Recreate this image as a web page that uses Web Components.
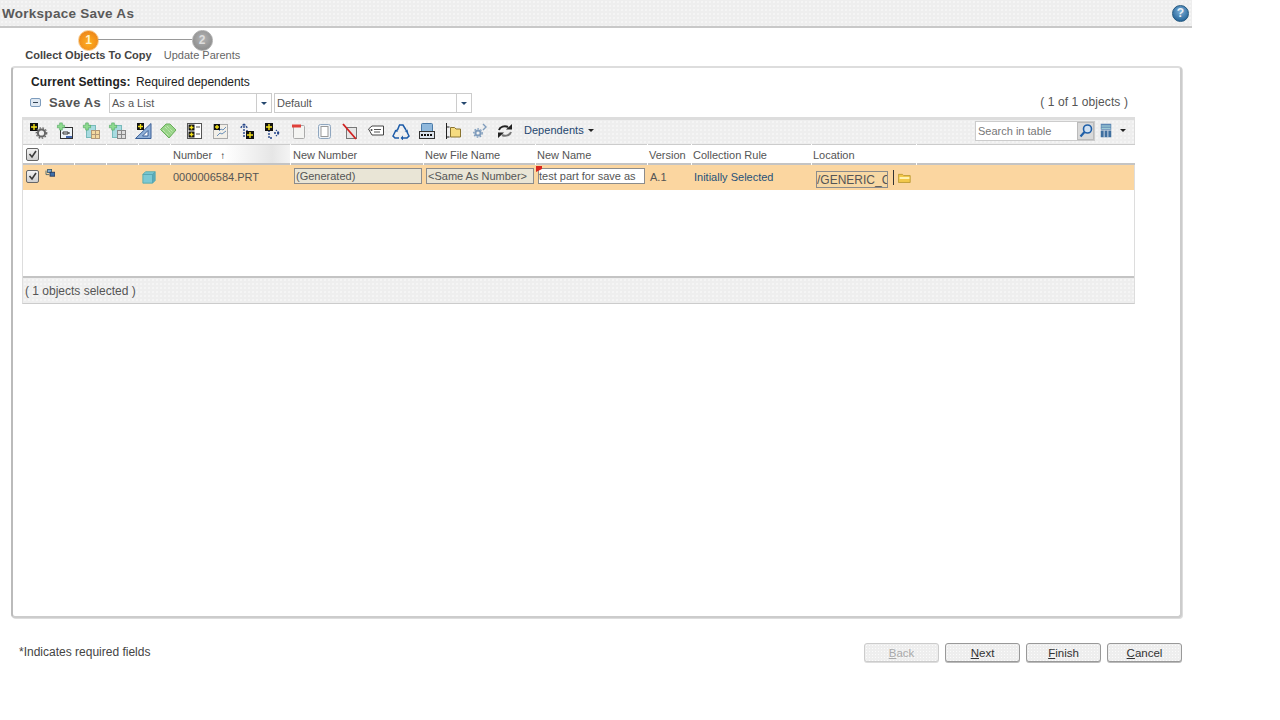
<!DOCTYPE html>
<html><head><meta charset="utf-8"><title>Workspace Save As</title>
<style>
html,body{margin:0;padding:0;background:#fff}
body{font:11px "Liberation Sans",Arial,sans-serif;color:#444;width:1280px;height:720px;overflow:hidden}
</style></head><body>
<x-page>
  <x-titlebar slot="top" title-text="Workspace Save As"></x-titlebar>
  <x-stepper slot="top"></x-stepper>
  <x-panel slot="main">
    <x-settings></x-settings>
    <x-saveas></x-saveas>
    <x-table></x-table>
  </x-panel>
  <x-footer slot="bottom"></x-footer>
</x-page>
<script>
const Y='#f4e21a',K='#111';
const mark=(x,y,s=7)=>`<rect x="${x}" y="${y}" width="${s}" height="${s}" fill="${K}"/><path d="M${x+s/2} ${y+1}v${s-2}M${x+1} ${y+s/2}h${s-2}" stroke="${Y}" stroke-width="1.4"/>`;
const plus=(x,y)=>`<path d="M${x-1.3} ${y-3.6}h2.6v2.300h2.300v2.600h-2.300v2.300h-2.600v-2.300h-2.300v-2.600h2.300z" fill="#8fdc90" stroke="#4aa35a" stroke-width=".6"/>`;
const gear=(x,y,r,c='#666')=>`<circle cx="${x}" cy="${y}" r="${r}" fill="none" stroke="${c}" stroke-width="2"/><circle cx="${x}" cy="${y}" r="${r+1.6}" fill="none" stroke="${c}" stroke-width="1.3" stroke-dasharray="1.6 1.5"/>`;
const ICONS={
 a:mark(0,1,8)+gear(11.500,11,3.6),
 b:`<rect x="4.500" y="5.500" width="12" height="11" fill="#eef4f8" stroke="#333"/><path d="M7 10h5v2H7zM12 11h2" fill="none" stroke="#333"/><rect x="10" y="14" width="6" height="2" fill="#46a"/>`+plus(5,4.500),
 c:`<rect x="4.500" y="3.500" width="9" height="12" fill="#a8dbe0" stroke="#7bb"/><rect x="9.500" y="8.500" width="8" height="8" fill="#f3d9a0" stroke="#b09878"/><path d="M9.500 12.500h8M13.500 8.500v8" stroke="#b09878"/>`+plus(5,4.500),
 d:`<rect x="4.500" y="3.500" width="9" height="12" fill="#a8dbe0" stroke="#7bb"/><rect x="9.500" y="8.500" width="8" height="8" fill="#ddd" stroke="#888"/><path d="M9.500 12.500h8M13.500 8.500v8" stroke="#888"/>`+plus(5,4.500),
 e:`<path d="M17 1.500v15H1.500z" fill="#8fb0d8" stroke="#3a5f96"/><path d="M14 8.500v5.500H8.500z" fill="#fff" stroke="#3a5f96"/>`+mark(3,1,7),
 f:`<path d="M1.500 7.500L7 2h4l6 6-7 8z" fill="#98d488" stroke="#6aae5c"/><path d="M6 5l7 7M4 8l6 6M8 4l6 6" stroke="#d7f0c8" stroke-dasharray="1 1"/>`,
 g:`<rect x="2.500" y="1.500" width="14" height="15" fill="#fff" stroke="#555"/>`+mark(3.500,2.500,6)+mark(3.500,9.500,6)+`<path d="M11 5h4M11 12h4" stroke="#555"/>`,
 h:`<rect x="2.500" y="2.500" width="14" height="14" fill="#f2efe8" stroke="#aaa"/><path d="M8 9l2-2 2 1 3-3M6 14l3-3 2 1 4-3" fill="none" stroke="#6a8fb8"/>`+mark(3,2,6),
 i:`<path d="M7 15V4M7 2L3.500 6M7 2l3.500 4M11 9H8" fill="none" stroke="#26468a" stroke-width="1.400" stroke-dasharray="2 1"/>`+mark(9,9,8),
 j:`<path d="M6 8v8h4M11 11h5M16 11l-3-3M16 11l-3 3" fill="none" stroke="#26468a" stroke-width="1.400" stroke-dasharray="2 1"/>`+mark(2,1,8),
 k:`<rect x="4.500" y="3.500" width="11" height="13" rx="1" fill="#f4f4f2" stroke="#aaa"/><rect x="3" y="2.500" width="9" height="3" fill="#e0403a"/>`,
 l:`<rect x="3.500" y="2.500" width="12" height="14" rx="2" fill="#eef3f8" stroke="#8fa6bf"/><rect x="6" y="4.500" width="7" height="10" fill="#fff" stroke="#999"/>`,
 m:`<rect x="5.500" y="5.500" width="10" height="11" fill="#e6e6e6" stroke="#777"/><path d="M2 2l13 15" stroke="#d02020" stroke-width="1.800"/>`,
 n:`<path d="M1.500 7l3.500-3h11.500v9H5z" fill="#fff" stroke="#444"/><path d="M7 7.500h7M7 10h6" stroke="#555"/><circle cx="4.500" cy="8" r="1" fill="#444"/>`,
 o:`<path d="M7 3h4l3 5M15 10l2 4-2 2h-4M7 16H3l-2-2 3-6M5.500 8l2-5" fill="none" stroke="#1c5ba8" stroke-width="1.500"/><path d="M11 13.500v5l-2.500-2.500zM12.500 9l3-1.500.7 3.500zM2.500 9l3 1 .5-3.500z" fill="#1c5ba8"/>`,
 p:`<rect x="3.500" y="1.500" width="11" height="9" rx="1" fill="#8fb8dc" stroke="#4a7aa8"/><rect x="1.500" y="9.500" width="15" height="7" fill="#dde4ec" stroke="#333"/><path d="M3 13h12" stroke="#111" stroke-width="2" stroke-dasharray="2 1"/>`,
 q:`<path d="M2.500 1v16M2.500 5h3M2.500 15h3" stroke="#222"/><path d="M6.500 5.500h4l1.500 1.500h4.500v8h-10z" fill="#f6dc80" stroke="#8a7430"/>`,
 r:gear(8,11,2.6,'#7f9cbc')+`<path d="M13 2l3 3-3 3" fill="none" stroke="#7f9cbc" stroke-width="1.400"/>`,
 s:`<path d="M3 8a6 5 0 0 1 9-3" fill="none" stroke="#222" stroke-width="2"/><path d="M15 10a6 5 0 0 1-9 3" fill="none" stroke="#777" stroke-width="2"/><path d="M10 7.500h6V2zM8 10.500H2V16z" fill="#222"/>`,
 col:`<rect x="1" y="0" width="14" height="8" fill="#5d87b4"/><path d="M2 3h12M2 6h12" stroke="#cfe" /><rect x="1" y="9" width="14" height="9" fill="#3f6f9f"/><path d="M5.500 9v9M10.500 9v9" stroke="#fff"/>`,
 tree:`<rect x="3" y="0.500" width="5" height="4" fill="#7fa8d0" stroke="#356"/><rect x="6" y="4" width="6" height="5" fill="#3f6fa8" stroke="#235"/><path d="M1 2v5h4" fill="none" stroke="#356"/>`,
 cube:`<path d="M1 5l3-3h11v10l-3 3H1z" fill="#7cc9d4" stroke="#5aa"/><path d="M12 5v10M12 5l3-3M1 5h11" stroke="#4f9ea8"/><path d="M12 5l3-3v10l-3 3z" fill="#5aaab8"/>`,
 search:`<circle cx="9.500" cy="6" r="4" fill="#cfe0f2" stroke="#1f5fa8" stroke-width="1.600"/><path d="M6.500 9l-4 4.500" stroke="#1f5fa8" stroke-width="2.200"/>`,
 folder:`<path d="M.5 2.500h5l1.500 1.500h8v8.500H.5z" fill="#f2c84a" stroke="#b8962f"/><path d="M2 7h12" stroke="#fff2b0" stroke-width="2.400"/>`
};
class Base extends HTMLElement{
  constructor(){super();this.attachShadow({mode:'open'}).innerHTML=this.render();}
  render(){return '<slot></slot>';}
}
const def=(n,c)=>customElements.define(n,c);
const DOTS=(c,s=4)=>`#eee radial-gradient(circle,${c} .6px,transparent .9px) 0 0/${s}px ${s}px`;
def('x-icon',class extends Base{
  render(){const n=this.getAttribute('name'),w=this.getAttribute('w')||18,h=this.getAttribute('h')||18,vb=this.getAttribute('vb')||`0 0 ${w} ${h}`;
    return `<style>:host{display:inline-flex;flex:none}svg{display:block}</style><svg width="${w}" height="${h}" viewBox="${vb}">${ICONS[n]}</svg>`;}
});
def('x-page',class extends Base{
  render(){return `<style>:host{display:flex;flex-direction:column;width:1192px;height:720px}
   .m{display:block;padding:0 10px 0 11px}.b{display:block}</style>
   <slot name="top"></slot><div class="m"><slot name="main"></slot></div><div class="b"><slot name="bottom"></slot></div>`;}
});
def('x-titlebar',class extends Base{
  render(){return `<style>:host{display:flex;align-items:center;justify-content:space-between;box-sizing:border-box;width:1192px;
    background:${DOTS('#f8f8f8')};border-bottom:2px solid #c8c8c8;padding:0 3px 0 2px;height:28px}
    b{font:bold 13.500px "Liberation Sans",Arial,sans-serif;color:#5a5a5a;letter-spacing:.27px}
    i{display:block;width:15px;height:15px;border-radius:50%;background:radial-gradient(circle at 50% 35%,#7fb0d8,#2b6a9e 75%);border:1px solid #24587f;color:#e8f0f6;font:bold 12px/15px "Liberation Sans",Arial,sans-serif;text-align:center;box-sizing:content-box}</style>
    <b>${this.getAttribute('title-text')}</b><i>?</i>`;}
});
def('x-step',class extends Base{
  render(){const on=this.hasAttribute('on');
   return `<style>:host{display:flex;flex-direction:column;align-items:center}
   .c{width:19px;height:19px;border-radius:50%;text-align:center;font:bold 12px/19px "Liberation Sans",Arial,sans-serif;color:${on?'#fff3c8':'#ddd'};
     background:${on?'radial-gradient(circle at 50% 60%,#ffb01e,#ef8a1a 70%)':'radial-gradient(circle at 50% 40%,#b5b5b5,#8e8e8e 75%)'};border:1px solid ${on?'#f7c98a':'#aaa'}}
   .l{margin-top:-2px;font:${on?'bold ':''}11px/13px "Liberation Sans",Arial,sans-serif;color:${on?'#444':'#666'};white-space:nowrap}</style>
   <div class="c">${this.getAttribute('n')}</div><div class="l">${this.getAttribute('label')}</div>`;}
});
def('x-stepper',class extends Base{
  render(){return `<style>:host{display:flex;align-items:flex-start;height:38px;padding:2px 0 0 25px;box-sizing:border-box;position:relative}
   .w1{width:127px;display:flex;justify-content:center}.w2{width:76px;margin-left:12px;display:flex;justify-content:center}
   .line{position:absolute;left:98px;top:11px;width:94px;height:1px;background:#999}</style>
   <div class="line"></div><div class="w1"><x-step n="1" label="Collect Objects To Copy" on></x-step></div><div class="w2"><x-step n="2" label="Update Parents"></x-step></div>`;}
});
def('x-panel',class extends Base{
  render(){return `<style>:host{display:block;box-sizing:border-box;width:1171px;height:552px;border:2px solid #ccc;border-top-color:#ddd;border-left-color:#bbb;border-radius:4px;background:#fff;padding:7px 0 0 9px;box-shadow:1px 1px 0 #ddd}</style><slot></slot>`;}
});
def('x-settings',class extends Base{
  render(){return `<style>:host{display:block;margin-left:9px;font:12px/14px "Liberation Sans",Arial,sans-serif;color:#222;letter-spacing:-.05px}b{margin-right:2px;letter-spacing:.1px}</style><b>Current Settings:</b> Required dependents`;}
});
def('x-select',class extends Base{
  render(){return `<style>:host{display:flex;box-sizing:border-box;height:20px;width:${this.getAttribute('w')}px;border:1px solid #ccc;background:#fff;font:11px/18px "Liberation Sans",Arial,sans-serif;color:#555}
   span{flex:1;padding-left:2px;border-right:1px solid #ccc}i{width:14px;position:relative}i:after{content:"";position:absolute;left:4px;top:8px;border:3px solid transparent;border-top:3px solid #24476e;border-bottom:0}</style><span>${this.getAttribute('label')}</span><i></i>`;}
});
def('x-saveas',class extends Base{
  render(){return `<style>:host{display:flex;align-items:center;height:23px;margin:2px 0 3px 0;padding-left:8px;width:1098px;gap:0}
   .t{width:11px;height:9px;border:1px solid #7d9cbd;background:#dfe8f2;border-radius:2px;position:relative;box-sizing:border-box;margin-right:8px;flex:none}
   .t:after{content:"";position:absolute;left:2px;right:2px;top:3px;height:1px;background:#345}
   b{font:bold 13px "Liberation Sans",Arial,sans-serif;color:#555;width:60px;flex:none;letter-spacing:.25px}
   x-select{margin-right:2px}.c{margin-left:auto;font:12px "Liberation Sans",Arial,sans-serif;color:#555;letter-spacing:.1px;padding-bottom:2px}</style>
   <div class="t"></div><b>Save As</b><x-select w="163" label="As a List"></x-select><x-select w="198" label="Default"></x-select><div class="c">( 1 of 1 objects )</div>`;}
});
const COLS='19px 31px 31px 31px 31px 119px 132px 111px 111px 43px 119px 104px 218px';
const TB=['a','b','c','d','e','f','g','h','i','j','k','l','m','n','o','p','q','r','s'];
def('x-toolbar',class extends Base{
  render(){return `<style>:host{display:flex;align-items:center;height:26px;box-sizing:border-box;padding:0 0 3px 3px;border-top:2px solid #ddd;
    background:${DOTS('#f8f8f8')}}
    .b{width:25.900px;display:flex;justify-content:center;flex:none}
    .d{margin:0 0 2px 6px;font:11px "Liberation Sans",Arial,sans-serif;letter-spacing:.05px;color:#24476e;white-space:nowrap}.d:after,.m:after{content:"";display:inline-block;border:3px solid transparent;border-top:3px solid #222;border-bottom:0;margin-left:4px;vertical-align:2px}
    .s{margin-left:auto;display:flex;box-sizing:border-box;width:120px;height:20px;border:1px solid #ccc;background:#fff;color:#777;font:11px/18px "Liberation Sans",Arial,sans-serif;padding-left:2px;justify-content:space-between}
    .s i{display:flex;width:17px;background:#d9d9d9;border:1px solid #bbb;box-sizing:border-box;align-items:center;justify-content:center}
    .col{margin-left:5px}.m{width:14px;margin-right:8px;text-align:right;line-height:0}.m:after{margin:0}</style>
    ${TB.map(n=>`<div class="b"><x-icon name="${n}"></x-icon></div>`).join('')}<div class="d">Dependents</div>
    <div class="s">Search in table<i><x-icon name="search" w="15" h="15"></x-icon></i></div><x-icon class="col" name="col" w="12" h="15" vb="0 0 16 18"></x-icon><div class="m"></div>`;}
});
def('x-check',class extends Base{
  render(){return `<style>:host{display:block;width:13px;height:13px;border:1px solid #666;border-radius:2px;box-sizing:border-box;background:linear-gradient(#f4f4f4,#cfcfcf)}svg{display:block}</style>
  <svg width="11" height="11"><path d="M2.500 5l2.500 3 4-6" fill="none" stroke="#3a3a3a" stroke-width="1.600"/></svg>`;}
});
def('x-input',class extends Base{
  render(){const k=this.getAttribute('kind');const bg=k==='ro'?'#e9e5d6':k==='loc'?'#f7d8a4':'#fff';
   return `<style>:host{display:block;box-sizing:border-box;height:${this.getAttribute('h')||16}px;width:${this.getAttribute('w')}px;border:1px solid #8c8c8c;background:${bg};font:${this.getAttribute('fs')||11}px/${this.getAttribute('lh')||14}px "Liberation Sans",Arial,sans-serif;color:#555;overflow:hidden;white-space:nowrap;padding-left:${this.getAttribute('pl')||1}px}</style><slot></slot>`;}
});
def('x-table',class extends Base{
  render(){
   const heads=['<x-check></x-check>','','','','','Number','New Number','New File Name','New Name','Version','Collection Rule','Location',''];
   const h=heads.map((t,i)=>`<div class="h h${i}${i===5?' sort':''}${i===0?' ck':''}">${t}${i===5?'<span class="arrow">↑</span>':''}</div>`).join('');
   const cells=[
    '<x-check></x-check>','<x-icon name="tree" w="10" h="8" vb="0 0 12 10"></x-icon>','','',
    '<x-icon name="cube" w="14" h="14" vb="0 0 16 16"></x-icon>','<span class="t">0000006584.PRT</span>',
    '<x-input kind="ro" w="128">(Generated)</x-input>','<x-input kind="ro" w="108">&lt;Same As Number&gt;</x-input>',
    '<span class="flag"></span><x-input w="107" pl="0">test part for save as</x-input>','<span class="t">A.1</span>',
    '<span class="rule">Initially Selected</span>',
    '<x-input class="li" kind="loc" w="72" h="17" fs="12" lh="16" pl="0">/GENERIC_CO</x-input><span class="bar"></span><x-icon class="fo" name="folder" w="13" h="12" vb="0 0 16 14"></x-icon>',''
   ];
   const r=cells.map((c,i)=>`<div class="c c${i}">${c}</div>`).join('');
   return `<style>:host{display:block;width:1113px;box-sizing:border-box;border:1px solid #ddd;border-bottom:1px solid #ccc;background:#fff;font:11px "Liberation Sans",Arial,sans-serif;color:#444}
   .g{display:grid;grid-template-columns:${COLS};column-gap:1px;width:1111px}
   .h{height:21px;line-height:20px;box-sizing:border-box;border-top:1px solid #ccc;border-bottom:2px solid #c4c4c4;padding-left:1px;white-space:nowrap;overflow:hidden;color:#555;background:#fff}
   .h5,.h6{padding-left:2px}
   .ck{display:flex;align-items:center;justify-content:center;padding-left:0}
   .sort{background:linear-gradient(90deg,#fff 45%,#e6e6e6 85%,#f4f4f4)}
   .arrow{font-size:10px;color:#111;margin-left:8px;font-weight:bold}
   .rowbg{background:#fbd6a0;height:25px;width:1111px}
   .c{display:flex;align-items:center;height:25px;white-space:nowrap;position:relative;min-width:0;box-sizing:border-box;padding-bottom:2px}
   .c0{justify-content:center}.c1{padding:0 0 9px 2px}.c4{padding-left:3px}.c5{padding-left:2px}
   .c6,.c7{padding-left:3px}.c8{padding-left:2px}.c9{padding-left:2px}.c10{padding-left:2px}.c11{padding-left:4px}
   .rule{color:#26527a}.t{color:#555}
   .c7 x-input{margin-left:-1px}.c6 x-input,.c7 x-input,.c8 x-input{margin-top:-1px}
   .flag{position:absolute;left:0;top:1px;border:3px solid transparent;border-left:6px solid #d8261c;border-top:3px solid #d8261c;border-right:0;border-bottom:3px solid transparent;z-index:1}
   .c11{align-items:flex-start;padding-bottom:0}.li{margin-top:6px}.bar{width:1px;height:15px;background:#333;margin:5px 4px 0 5px}.fo{margin-top:7px}
   .empty{height:88px;border-bottom:2px solid #c4c4c4;box-sizing:border-box;margin-top:0;width:1111px;background:#fff}
   .f{height:25px;line-height:26px;padding-left:2px;color:#555;font-size:12px;background:${DOTS('#f8f8f8')}}</style>
   <x-toolbar></x-toolbar><div class="g">${h}</div><div class="rowbg"><div class="g">${r}</div></div><div class="empty"></div><div class="f">( 1 objects selected )</div>`;}
});
def('x-btn',class extends Base{
  render(){const k=this.getAttribute('key'),l=this.getAttribute('label'),d=this.hasAttribute('disabled');
   return `<style>:host{display:flex;align-items:center;justify-content:center;box-sizing:border-box;width:75px;height:19px;border:1px solid ${d?'#ccc':'#999'};border-radius:3px;background:#eee radial-gradient(circle,#fbfbfb .6px,transparent .9px) 0 0/3px 3px;box-shadow:0 1px 0 ${d?'#ddd':'#bbb'};font:11.500px "Liberation Sans",Arial,sans-serif;color:${d?'#aaa':'#333'}}u{text-decoration:underline}</style><u>${k}</u>${l.slice(1)}`;}
});
def('x-footer',class extends Base{
  render(){return `<style>:host{display:flex;align-items:flex-start;justify-content:space-between;padding:25px 10px 0 19px;box-sizing:border-box;width:1192px}
   .n{font:12px/16px "Liberation Sans",Arial,sans-serif;color:#444;margin-top:1px}.b{display:flex;gap:6px}</style>
   <div class="n">*Indicates required fields</div><div class="b"><x-btn key="B" label="Back" disabled></x-btn><x-btn key="N" label="Next"></x-btn><x-btn key="F" label="Finish"></x-btn><x-btn key="C" label="Cancel"></x-btn></div>`;}
});
</script>
</body></html>
